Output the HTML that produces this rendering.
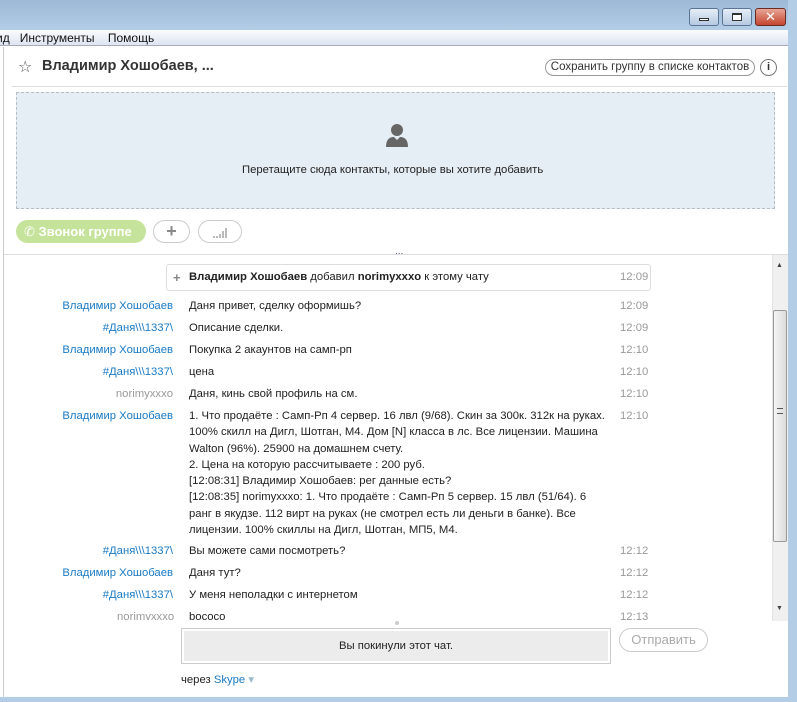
<!DOCTYPE html>
<html><head><meta charset="utf-8"><style>
*{margin:0;padding:0;box-sizing:border-box}
body{width:797px;height:702px;overflow:hidden;position:relative;background:#fff;font-family:"Liberation Sans","DejaVu Sans",sans-serif;font-size:11.3px;color:#222}
.a{position:absolute;white-space:nowrap}
.n{position:absolute;right:624px;color:#1a7ac4;white-space:nowrap}
.nn{color:#999}
.t{position:absolute;left:189px;white-space:nowrap}
.tm{position:absolute;left:620px;color:#999;white-space:nowrap}
</style></head><body>
<div class="a" style="left:0;top:0;width:797px;height:30px;background:linear-gradient(#9db9d6,#b3cde6)"></div>
<div class="a" style="left:788px;top:0;width:9px;height:702px;background:#b4cde6"></div>
<div class="a" style="left:0;top:697px;width:797px;height:5px;background:#b4cde6"></div>
<div class="a" style="left:689px;top:8px;width:30px;height:18px;border:1px solid #5a7494;border-radius:3px;background:linear-gradient(#e6eef8,#b5c9e0)"><div class="a" style="left:9px;top:9px;width:10px;height:3px;border:1px solid #333;background:#fff"></div></div>
<div class="a" style="left:722px;top:8px;width:30px;height:18px;border:1px solid #5a7494;border-radius:3px;background:linear-gradient(#e6eef8,#b5c9e0)"><div class="a" style="left:9px;top:4px;width:10px;height:8px;border:1px solid #333;border-top-width:2px;background:#fff"></div></div>
<div class="a" style="left:755px;top:8px;width:31px;height:18px;border:1px solid #6b2a22;border-radius:3px;background:linear-gradient(#e8a595,#c4452f);color:#fff;font-weight:bold;font-size:13px;text-align:center;line-height:16px">✕</div>
<div class="a" style="left:0;top:30px;width:788px;height:16px;background:linear-gradient(#fafbfd,#dde5f2);border-bottom:1px solid #aab"></div>
<div class="a" style="left:-4px;top:31px;font-size:12px;color:#111">ид&nbsp;&nbsp;&nbsp;Инструменты&nbsp;&nbsp;&nbsp;&nbsp;Помощь</div>
<div class="a" style="left:3px;top:47px;width:1px;height:650px;background:#ccc"></div>
<div class="a" style="left:18px;top:57px;font-size:16px;color:#555">☆</div>
<div class="a" style="left:42px;top:58px;font-size:14.5px;font-weight:bold;color:#333">Владимир Хошобаев, ...</div>
<div class="a" style="left:545px;top:59px;width:210px;height:17px;border:1px solid #999;border-radius:9px;font-size:11.5px;color:#333;text-align:center;line-height:15px">Сохранить группу в списке контактов</div>
<div class="a" style="left:760px;top:59px;width:17px;height:17px;border:1px solid #777;border-radius:50%;font-size:11px;font-weight:bold;text-align:center;line-height:15px;color:#333">i</div>
<div class="a" style="left:12px;top:86px;width:775px;height:1px;background:#ddd"></div>
<div class="a" style="left:16px;top:92px;width:759px;height:117px;background:#e6eef5;border:1px dashed #b5bcc4"></div>
<svg class="a" style="left:384px;top:122px" width="26" height="26" viewBox="0 0 26 26"><circle cx="13" cy="8" r="6" fill="#666"/><path d="M2 25 Q2 15 10 15 L13 18 L16 15 Q24 15 24 25Z" fill="#666"/></svg>
<div class="a" style="left:242px;top:164px;color:#222">Перетащите сюда контакты, которые вы хотите добавить</div>
<div class="a" style="left:16px;top:220px;width:130px;height:23px;background:#c5e39a;border-radius:12px;color:#fff;font-size:13px;font-weight:bold;line-height:23px;padding-left:8px">✆ Звонок группе</div>
<div class="a" style="left:153px;top:220px;width:37px;height:23px;border:1px solid #ccc;border-radius:12px;text-align:center;color:#888;font-size:18px;line-height:20px;font-weight:bold">+</div>
<div class="a" style="left:198px;top:220px;width:44px;height:23px;border:1px solid #ccc;border-radius:12px"><svg class="a" style="left:14px;top:5px" width="16" height="12"><g fill="#bbb"><rect x="0" y="10" width="2" height="2"/><rect x="3" y="10" width="2" height="2"/><rect x="6" y="8" width="2" height="4"/><rect x="9" y="5" width="2" height="7"/><rect x="12" y="2" width="2" height="10"/></g></svg></div>
<div class="a" style="left:4px;top:254px;width:784px;height:1px;background:#ddd"></div>
<div class="a" style="left:395px;top:246px;color:#557;font-size:10px">...</div>
<div class="a" style="left:166px;top:264px;width:485px;height:27px;border:1px solid #ddd;border-radius:3px"></div>
<div class="a" style="left:173px;top:270px;color:#888;font-weight:bold;font-size:13px">+</div>
<div class="t" style="top:271px"><b>Владимир Хошобаев</b> добавил <b>norimyxxxo</b> к этому чату</div>
<div class="tm" style="top:271px">12:09</div>
<div class="n" style="top:300px">Владимир Хошобаев</div><div class="t" style="top:300px">Даня привет, сделку оформишь?</div><div class="tm" style="top:300px">12:09</div>
<div class="n" style="top:322px">#Даня\\\1337\</div><div class="t" style="top:322px">Описание сделки.</div><div class="tm" style="top:322px">12:09</div>
<div class="n" style="top:344px">Владимир Хошобаев</div><div class="t" style="top:344px">Покупка 2 акаунтов на самп-рп</div><div class="tm" style="top:344px">12:10</div>
<div class="n" style="top:366px">#Даня\\\1337\</div><div class="t" style="top:366px">цена</div><div class="tm" style="top:366px">12:10</div>
<div class="n nn" style="top:388px">norimyxxxo</div><div class="t" style="top:388px">Даня, кинь свой профиль на см.</div><div class="tm" style="top:388px">12:10</div>
<div class="n" style="top:410px">Владимир Хошобаев</div><div class="tm" style="top:410px">12:10</div>
<div class="t" style="top:408px;line-height:16.3px">1. Что продаёте : Самп-Рп 4 сервер. 16 лвл (9/68). Скин за 300к. 312к на руках.<br>100% скилл на Дигл, Шотган, М4. Дом [N] класса в лс. Все лицензии. Машина<br>Walton (96%). 25900 на домашнем счету.<br>2. Цена на которую рассчитываете : 200 руб.<br>[12:08:31] Владимир Хошобаев: рег данные есть?<br>[12:08:35] norimyxxxo: 1. Что продаёте : Самп-Рп 5 сервер. 15 лвл (51/64). 6<br>ранг в якудзе. 112 вирт на руках (не смотрел есть ли деньги в банке). Все<br>лицензии. 100% скиллы на Дигл, Шотган, МП5, М4.</div>
<div class="n" style="top:545px">#Даня\\\1337\</div><div class="t" style="top:545px">Вы можете сами посмотреть?</div><div class="tm" style="top:545px">12:12</div>
<div class="n" style="top:567px">Владимир Хошобаев</div><div class="t" style="top:567px">Даня тут?</div><div class="tm" style="top:567px">12:12</div>
<div class="n" style="top:589px">#Даня\\\1337\</div><div class="t" style="top:589px">У меня неполадки с интернетом</div><div class="tm" style="top:589px">12:12</div>
<div class="a" style="left:4px;top:609px;width:768px;height:11px;overflow:hidden"><div class="a" style="left:113px;top:2px;color:#999">norimyxxxo</div><div class="a" style="left:185px;top:2px">bococo</div><div class="a" style="left:616px;top:2px;color:#999">12:13</div></div>
<div class="a" style="left:772px;top:255px;width:16px;height:366px;background:#f0f0f0;border-left:1px solid #e4e4e4"></div>
<div class="a" style="left:776px;top:262px;font-size:7px;color:#444">▲</div>
<div class="a" style="left:776px;top:605px;font-size:7px;color:#444">▼</div>
<div class="a" style="left:773px;top:310px;width:14px;height:232px;border:1px solid #999;border-radius:2px;background:linear-gradient(90deg,#f4f4f4,#dcdcdc)"></div>
<div class="a" style="left:777px;top:408px;width:6px;height:6px;border-top:1px solid #555;border-bottom:1px solid #555"></div>
<div class="a" style="left:395px;top:621px;width:4px;height:4px;border-radius:50%;background:#ccc"></div>
<div class="a" style="left:181px;top:628px;width:430px;height:36px;border:1px solid #ccc;padding:2px"><div style="width:100%;height:100%;background:#ececec;text-align:center;line-height:30px;color:#222">Вы покинули этот чат.</div></div>
<div class="a" style="left:619px;top:628px;width:89px;height:24px;border:1px solid #ccc;border-radius:12px;text-align:center;line-height:22px;color:#aaa;font-size:13px">Отправить</div>
<div class="a" style="left:181px;top:673px;color:#222">через <span style="color:#1a7ac4">Skype</span> <span style="color:#9bc">▾</span></div>
</body></html>
